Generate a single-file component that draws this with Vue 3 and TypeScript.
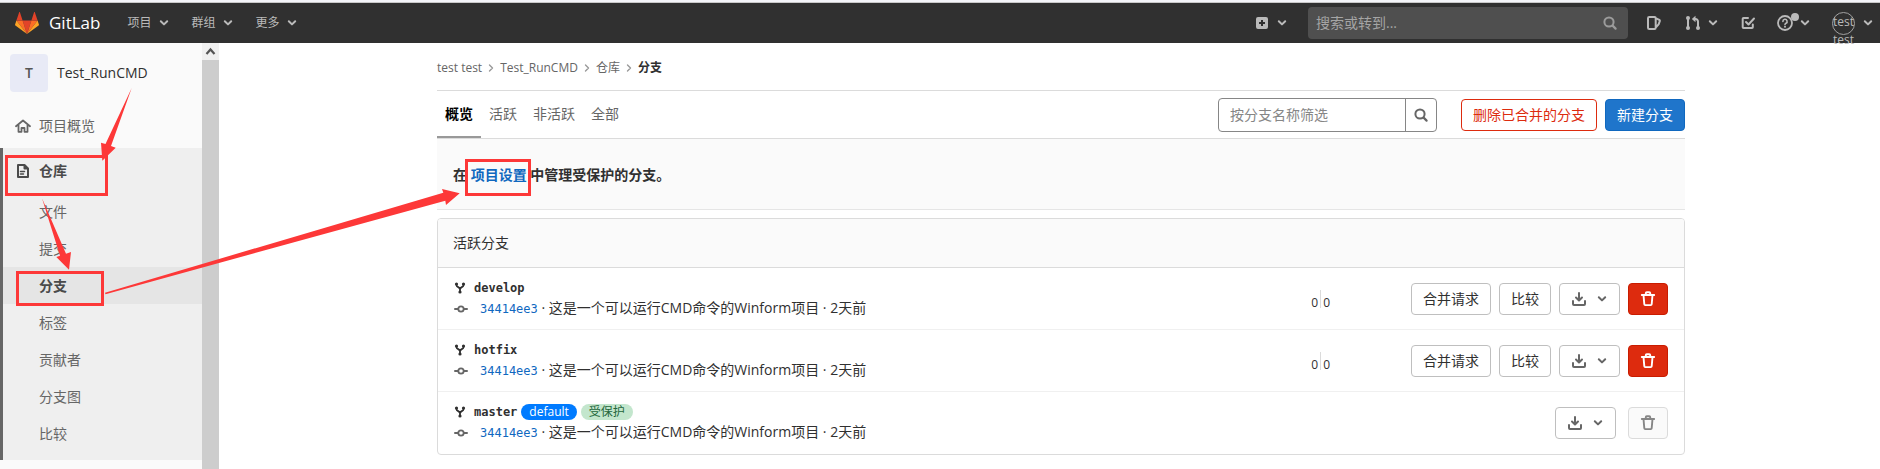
<script setup lang="ts">
interface Branch {
  name: string
  isDefault: boolean
}

const navItems: string[] = ['项目', '群组', '更多']
const subItems: string[] = ['文件', '提交', '分支', '标签', '贡献者', '分支图', '比较']
const tabs: string[] = ['概览', '活跃', '非活跃', '全部']
const branches: Branch[] = [
  { name: 'develop', isDefault: false },
  { name: 'hotfix', isDefault: false },
  { name: 'master', isDefault: true },
]
</script>

<template>
  <svg class="sprite" aria-hidden="true">
    <symbol id="chevron" viewBox="0 0 10 10">
      <path d="M1.8 3.2 5 6.4l3.2-3.2" fill="none" stroke="currentColor" stroke-width="2" stroke-linecap="round" stroke-linejoin="round" />
    </symbol>
    <symbol id="arrow-right" viewBox="0 0 8 8">
      <path d="M2.5 1 5.5 4l-3 3" fill="none" stroke="currentColor" stroke-width="1.4" stroke-linecap="round" stroke-linejoin="round" />
    </symbol>
    <symbol id="search" viewBox="0 0 16 16">
      <circle cx="7" cy="7" r="4.6" fill="none" stroke="currentColor" stroke-width="2" />
      <path d="m10.6 10.6 3 3" fill="none" stroke="currentColor" stroke-width="2.2" stroke-linecap="round" />
    </symbol>
    <symbol id="plus" viewBox="0 0 16 16">
      <path fill="currentColor" fill-rule="evenodd" d="M4 2h8a2 2 0 0 1 2 2v8a2 2 0 0 1-2 2H4a2 2 0 0 1-2-2V4a2 2 0 0 1 2-2Zm3 3v2H5v2h2v2h2V9h2V7H9V5H7Z" />
    </symbol>
    <symbol id="issues" viewBox="0 0 16 16">
      <path d="M2 3.2A1.2 1.2 0 0 1 3.200 2H8.500A1.2 1.2 0 0 1 9.700 3.200V12.800A1.2 1.2 0 0 1 8.500 14H3.200A1.2 1.2 0 0 1 2 12.800ZM9.700 3.200l3.500 1.600a1 1 0 0 1 .6 1.300l-1.200 3.200-2.900 3.200" fill="none" stroke="currentColor" stroke-width="2" stroke-linejoin="round" />
    </symbol>
    <symbol id="merge" viewBox="0 0 16 16">
      <path d="M3 3v10M13 12.500V6.500a2.500 2.500 0 0 0-2.500-2.500H8.500" fill="none" stroke="currentColor" stroke-width="2" />
      <path d="M10.500.8v6.400L6.800 4Z" fill="currentColor" />
      <circle cx="3" cy="3" r="2" fill="currentColor" />
      <circle cx="3" cy="13" r="2" fill="currentColor" />
      <circle cx="13" cy="13" r="2" fill="currentColor" />
    </symbol>
    <symbol id="todo" viewBox="0 0 16 16">
      <path d="M8 3H3.500a.8.8 0 0 0-.8.800v8.500a.8.8 0 0 0 .8.800h8.500a.8.8 0 0 0 .8-.800V9.500M6 7l2.500 2.500L14 3.500" fill="none" stroke="currentColor" stroke-width="2" stroke-linecap="round" stroke-linejoin="round" />
    </symbol>
    <symbol id="help" viewBox="0 0 16 16">
      <circle cx="8" cy="8" r="7" fill="none" stroke="currentColor" stroke-width="1.800" />
      <path d="M5.900 6.400a2.100 2.100 0 1 1 3.100 1.800c-.7.400-1 .7-1 1.400" fill="none" stroke="currentColor" stroke-width="1.600" stroke-linecap="round" />
      <circle cx="8" cy="11.800" r="1" fill="currentColor" />
    </symbol>
    <symbol id="home" viewBox="0 0 16 16">
      <path d="M1 8.200 8 2.500l7 5.700M3.500 7v6.800h3V10h3v3.800h3V7" fill="none" stroke="currentColor" stroke-width="1.800" stroke-linecap="round" stroke-linejoin="round" />
    </symbol>
    <symbol id="doc" viewBox="0 0 16 16">
      <path d="M3 2h6.500L13 5.500V14H3ZM9.500 2v3.500H13" fill="none" stroke="currentColor" stroke-width="2" stroke-linejoin="round" />
      <path d="M5.500 8.500h4M5.500 11h3" fill="none" stroke="currentColor" stroke-width="1.500" stroke-linecap="round" />
    </symbol>
    <symbol id="fork" viewBox="0 0 12 12">
      <path d="M2.500 2v1.200C2.500 5.500 6 4.800 6 7.300V10M9.500 2v1.200C9.500 5.500 6 4.800 6 7.300" fill="none" stroke="currentColor" stroke-width="1.800" />
      <circle cx="2.500" cy="2" r="1.600" fill="currentColor" />
      <circle cx="9.500" cy="2" r="1.600" fill="currentColor" />
      <circle cx="6" cy="10" r="1.600" fill="currentColor" />
    </symbol>
    <symbol id="commit" viewBox="0 0 14 14">
      <path d="M1 7h3M10 7h3" stroke="currentColor" stroke-width="2" stroke-linecap="round" />
      <circle cx="7" cy="7" r="2.700" fill="none" stroke="currentColor" stroke-width="1.800" />
    </symbol>
    <symbol id="download" viewBox="0 0 16 16">
      <path d="M2 10v3a1 1 0 0 0 1 1h10a1 1 0 0 0 1-1v-3M8 2v7M5 6.500l3 3 3-3" fill="none" stroke="currentColor" stroke-width="2" stroke-linecap="round" stroke-linejoin="round" />
    </symbol>
    <symbol id="trash" viewBox="0 0 16 16">
      <path d="M1.800 4h12.400M3.500 4l.8 9.200a1 1 0 0 0 1 .9h5.400a1 1 0 0 0 1-.9L12.500 4M5.800 3.500V2.200a1 1 0 0 1 1-1h2.400a1 1 0 0 1 1 1v1.300" fill="none" stroke="currentColor" stroke-width="1.900" stroke-linejoin="round" stroke-linecap="round" />
    </symbol>
  </svg>

  <div class="page">
    <div class="strip"></div>
    <header class="topbar">
      <a class="brand" href="#">
        <svg width="24" height="22" viewBox="0 0 24 22" aria-hidden="true">
          <path d="m12 22 4.400-13.500H7.600Z" fill="#e24329" />
          <path d="M12 22 7.600 8.500H1.400Z" fill="#fc6d26" />
          <path d="M1.400 8.500.1 12.600a.9.900 0 0 0 .3 1L12 22Z" fill="#fca326" />
          <path d="M1.400 8.500h6.200L5 .4a.45.45 0 0 0-.9 0Z" fill="#e24329" />
          <path d="m12 22 4.400-13.500h6.200Z" fill="#fc6d26" />
          <path d="m22.600 8.500 1.300 4.100a.9.900 0 0 1-.3 1L12 22Z" fill="#fca326" />
          <path d="M22.600 8.500h-6.200L19 .4a.45.45 0 0 1 .9 0Z" fill="#e24329" />
        </svg>
        <span class="wordmark">GitLab</span>
      </a>
      <nav class="main-nav">
        <button v-for="item in navItems" :key="item" type="button" class="nav-btn">
          {{ item }}<svg class="s10"><use href="#chevron" /></svg>
        </button>
      </nav>
      <div class="tools">
        <button type="button" class="nav-btn tight" aria-label="新建">
          <svg class="s16"><use href="#plus" /></svg><svg class="s10"><use href="#chevron" /></svg>
        </button>
        <label class="global-search">
          <input type="text" placeholder="搜索或转到..." aria-label="搜索或转到" />
          <svg class="s16"><use href="#search" /></svg>
        </label>
        <a class="tool" href="#" aria-label="议题"><svg class="s16"><use href="#issues" /></svg></a>
        <button type="button" class="nav-btn tight merge" aria-label="合并请求">
          <svg class="s16"><use href="#merge" /></svg><svg class="s10"><use href="#chevron" /></svg>
        </button>
        <a class="tool" href="#" aria-label="待办事项"><svg class="s16"><use href="#todo" /></svg></a>
        <button type="button" class="nav-btn tight help" aria-label="帮助">
          <svg class="s16"><use href="#help" /></svg><i class="dot"></i><svg class="s10"><use href="#chevron" /></svg>
        </button>
        <button type="button" class="nav-btn user" aria-label="test test">
          <span class="avatar">test test</span><svg class="s10"><use href="#chevron" /></svg>
        </button>
      </div>
    </header>

    <div class="body">
      <aside class="sidebar">
        <a class="project" href="#"><span class="project-avatar">T</span>Test_RunCMD</a>
        <a class="side-item" href="#"><svg class="s16"><use href="#home" /></svg>项目概览</a>
        <div class="side-group">
          <a class="side-item current" href="#"><svg class="s16"><use href="#doc" /></svg>仓库</a>
          <a v-for="item in subItems" :key="item" class="sub-item" :class="{ current: item === '分支' }" href="#">{{ item }}</a>
        </div>
      </aside>
      <div class="scrollbar" aria-hidden="true">
        <svg class="scroll-up" viewBox="0 0 17 17"><path d="m4.500 11 4-4.500 4 4.500" fill="none" stroke="#555" stroke-width="2.200" /></svg>
      </div>

      <main class="content">
        <nav class="crumbs">
          <a href="#">test test</a><svg class="s8"><use href="#arrow-right" /></svg>
          <a href="#">Test_RunCMD</a><svg class="s8"><use href="#arrow-right" /></svg>
          <a href="#">仓库</a><svg class="s8"><use href="#arrow-right" /></svg>
          <a href="#" class="here">分支</a>
        </nav>

        <div class="toolbar">
          <nav class="tabs">
            <a v-for="(tab, i) in tabs" :key="tab" href="#" :class="{ active: i === 0 }">{{ tab }}</a>
          </nav>
          <form class="filter" @submit.prevent>
            <input type="text" placeholder="按分支名称筛选" aria-label="按分支名称筛选" />
            <button type="submit" aria-label="搜索"><svg class="s16"><use href="#search" /></svg></button>
          </form>
          <button type="button" class="btn danger-outline">删除已合并的分支</button>
          <button type="button" class="btn primary">新建分支</button>
        </div>

        <h5 class="notice">在 <a href="#">项目设置</a> 中管理受保护的分支。</h5>

        <section class="card">
          <h4>活跃分支</h4>
          <ul>
            <li v-for="branch in branches" :key="branch.name">
              <div class="info">
                <div class="name-line">
                  <svg class="s12"><use href="#fork" /></svg>
                  <a class="name" href="#">{{ branch.name }}</a>
                  <template v-if="branch.isDefault">
                    <span class="badge blue">default</span>
                    <span class="badge green">受保护</span>
                  </template>
                </div>
                <div class="commit-line">
                  <svg class="s14"><use href="#commit" /></svg>
                  <span><a class="sha" href="#">34414ee3</a> · <a class="message" href="#">这是一个可以运行CMD命令的Winform项目</a> · 2天前</span>
                </div>
              </div>
              <div v-if="!branch.isDefault" class="divergence"><span>0</span><i></i><span>0</span></div>
              <div class="actions" :class="{ wide: branch.isDefault }">
                <template v-if="!branch.isDefault">
                  <button type="button" class="btn">合并请求</button>
                  <button type="button" class="btn">比较</button>
                </template>
                <button type="button" class="btn download" aria-label="下载">
                  <svg class="s16"><use href="#download" /></svg><svg class="s10"><use href="#chevron" /></svg>
                </button>
                <button type="button" class="btn remove" :disabled="branch.isDefault" aria-label="删除分支">
                  <svg class="s16"><use href="#trash" /></svg>
                </button>
              </div>
            </li>
          </ul>
        </section>
      </main>
    </div>

    <svg class="marks" aria-hidden="true">
      <g fill="none" stroke="#fd3838" stroke-width="3">
        <rect x="6.500" y="156.500" width="100" height="38" />
        <rect x="17.500" y="272.500" width="85" height="32" />
        <rect x="466.500" y="160.500" width="63" height="34" />
      </g>
      <g fill="#fd3838">
        <path d="m131.700 88-26.200 56-4.500-1.300 1.300 18 13.400-13-4.700-1.700Z" />
        <path d="m42 198.300 18 57.400-3.700 1.300L69 269.700 71 252l-5 1.700Z" />
        <path d="M105 292.700 443.300 192.700 442 189l17.700 4.300L446 205l-.7-4.300L105.500 294.200Z" />
      </g>
    </svg>
  </div>
</template>

<style>
body {
  margin: 0;
  background: #fff;
}
</style>

<style scoped>
* {
  box-sizing: border-box;
}
.page {
  position: relative;
  display: flex;
  flex-direction: column;
  height: 100vh;
  overflow: hidden;
  color: #303030;
  font-family: "Open Sans", "Noto Sans CJK SC", sans-serif;
  font-size: 14px;
  line-height: 20px;
}
a {
  color: inherit;
  text-decoration: none;
}
button,
input {
  font: inherit;
}
button {
  margin: 0;
}
svg {
  flex: none;
  display: block;
}
.sprite {
  position: absolute;
  width: 0;
  height: 0;
}
.s8 { width: 8px; height: 8px; }
.s10 { width: 10px; height: 10px; }
.s12 { width: 12px; height: 12px; }
.s14 { width: 14px; height: 14px; }
.s16 { width: 16px; height: 16px; }

.strip {
  flex: none;
  height: 3px;
  background: #f3f4f8;
  border-bottom: 1px solid #c8c8c8;
}
.topbar {
  flex: none;
  display: flex;
  align-items: center;
  height: 40px;
  padding: 0 7px 0 15px;
  background: #303030;
  color: #bababa;
}
.brand {
  display: flex;
  align-items: center;
  gap: 10px;
  color: #fff;
}
.wordmark {
  font-family: "Open Sans", sans-serif;
  font-size: 17px;
}
.main-nav {
  display: flex;
  gap: 22px;
  margin-left: 27px;
}
.nav-btn {
  display: flex;
  align-items: center;
  gap: 8px;
  padding: 0;
  border: 0;
  background: none;
  color: #bababa;
  font-size: 12px;
}
.tight {
  gap: 7px;
}
.tools {
  display: flex;
  align-items: center;
  margin-left: auto;
}
.global-search {
  display: flex;
  align-items: center;
  width: 320px;
  height: 32px;
  margin: 0 18px 0 21px;
  padding: 0 10px 0 8px;
  border-radius: 4px;
  background: #4f4f4f;
  color: #9b9b9b;
}
.global-search input {
  flex: 1;
  min-width: 0;
  padding: 0;
  border: 0;
  outline: 0;
  background: none;
  color: #ddd;
}
.global-search input::placeholder {
  color: #a5a5a5;
}
.merge {
  margin: 0 22px 0 23px;
}
.help {
  position: relative;
  margin: 0 22px 0 21px;
}
.dot {
  position: absolute;
  top: -2px;
  left: 14px;
  width: 8px;
  height: 8px;
  border-radius: 50%;
  background: #bababa;
}
.avatar {
  width: 23px;
  height: 23px;
  border: 1px solid #a0a0a0;
  border-radius: 50%;
  line-height: 18px;
  text-align: center;
}

.body {
  flex: 1;
  display: flex;
  min-height: 0;
}
.sidebar {
  flex: none;
  width: 202px;
  background: #fafafa;
}
.project {
  display: flex;
  align-items: center;
  gap: 9px;
  padding: 11px 10px;
}
.project-avatar {
  display: flex;
  align-items: center;
  justify-content: center;
  width: 38px;
  height: 38px;
  border-radius: 4px;
  background: #e8eaf6;
  color: #555;
  font-weight: 600;
}
.side-item {
  display: flex;
  align-items: center;
  gap: 8px;
  height: 45px;
  padding-left: 15px;
  color: #666;
}
.side-group {
  padding-bottom: 8px;
  border-left: 3px solid #666;
  background: #efefef;
}
.side-group .side-item {
  padding-left: 12px;
}
.sub-item {
  display: block;
  padding: 9px 0 8px 36px;
  color: #666;
}
.current {
  color: #4a4a4a;
  font-weight: 600;
}
.sub-item.current {
  background: #e5e5e5;
}
.scrollbar {
  flex: none;
  width: 17px;
  background: #cdcdcd;
}
.scroll-up {
  width: 17px;
  height: 17px;
  background: #f0f0f0;
}

.content {
  flex: 1;
  min-width: 0;
  padding: 0 195px 0 218px;
}
.crumbs {
  display: flex;
  align-items: center;
  gap: 5px;
  height: 48px;
  padding-top: 2px;
  border-bottom: 1px solid #dbdbdb;
  color: #666;
  font-size: 12px;
}
.crumbs svg {
  color: #999;
}
.crumbs .here {
  color: #303030;
  font-weight: 700;
}
.toolbar {
  display: flex;
  align-items: center;
  gap: 8px;
  border-bottom: 1px solid #dbdbdb;
}
.tabs {
  display: flex;
  margin-right: auto;
}
.tabs a {
  padding: 13px 8px 12px;
  border-bottom: 2px solid transparent;
  color: #666;
}
.tabs .active {
  border-color: #999;
  color: #000;
  font-weight: 700;
}
.filter {
  display: flex;
  margin-right: 16px;
  border: 1px solid #868686;
  border-radius: 4px;
}
.filter input {
  width: 186px;
  height: 32px;
  padding: 0 11px;
  border: 0;
  outline: 0;
  background: none;
}
.filter input::placeholder {
  color: #868686;
}
.filter button {
  display: flex;
  align-items: center;
  justify-content: center;
  width: 31px;
  padding: 0;
  border: 0;
  border-left: 1px solid #868686;
  background: none;
  color: #666;
}
.btn {
  display: flex;
  align-items: center;
  justify-content: center;
  height: 32px;
  padding: 0 11px;
  border: 1px solid #bfbfbf;
  border-radius: 4px;
  background: #fff;
  color: #303030;
}
.danger-outline {
  border-color: #dd2b0e;
  color: #dd2b0e;
}
.primary {
  border-color: #1068bf;
  background: #1f75cb;
  color: #fff;
}
.notice {
  margin: 0 0 8px;
  padding: 26px 16px 24px;
  border-bottom: 1px solid #e5e5e5;
  background: #fafafa;
  font-size: 14px;
  font-weight: 600;
}
.notice a {
  color: #1068bf;
}
.card {
  border: 1px solid #dbdbdb;
  border-radius: 4px;
  overflow: hidden;
}
.card h4 {
  margin: 0;
  padding: 14px 15px;
  border-bottom: 1px solid #dbdbdb;
  background: #fafafa;
  font-size: 14px;
  font-weight: 400;
}
.card ul {
  margin: 0;
  padding: 0;
  list-style: none;
}
.card li {
  display: flex;
  align-items: center;
  padding: 10px 16px;
  border-bottom: 1px solid #f0f0f0;
}
.card li:last-child {
  padding-bottom: 11px;
  border-bottom: 0;
}
.info {
  flex: 1;
  min-width: 0;
}
.name-line {
  display: flex;
  align-items: center;
  gap: 4px;
  height: 20px;
}
.name {
  margin-left: 4px;
  font-family: "DejaVu Sans Mono", monospace;
  font-size: 12px;
  font-weight: 700;
}
.badge {
  padding: 0 8px;
  border-radius: 8px;
  font-size: 12px;
  line-height: 16px;
}
.blue {
  background: #007bff;
  color: #fff;
}
.green {
  background: #c3e6cd;
  color: #24663b;
}
.commit-line {
  display: flex;
  align-items: center;
  gap: 12px;
  height: 21px;
}
.sha {
  color: #1068bf;
  font-family: "DejaVu Sans Mono", monospace;
  font-size: 12px;
}
.commit-line svg {
  color: #666;
}
.divergence {
  display: flex;
  gap: 2px;
  margin-right: 81px;
  padding-top: 9px;
  font-size: 12px;
  line-height: 26px;
}
.divergence i {
  width: 1px;
  height: 18px;
  background: #dbdbdb;
}
.actions {
  display: flex;
  gap: 8px;
}
.wide {
  gap: 12px;
}
.download {
  gap: 10px;
  padding: 0 12px 0 11px;
  color: #666;
}
.remove {
  border-color: #c91c00;
  background: #dd2b0e;
  color: #fff;
}
.remove:disabled {
  border-color: #dbdbdb;
  background: #fafafa;
  color: #868686;
}

.marks {
  position: absolute;
  top: 0;
  left: 0;
  width: 100%;
  height: 100%;
  pointer-events: none;
}
</style>
